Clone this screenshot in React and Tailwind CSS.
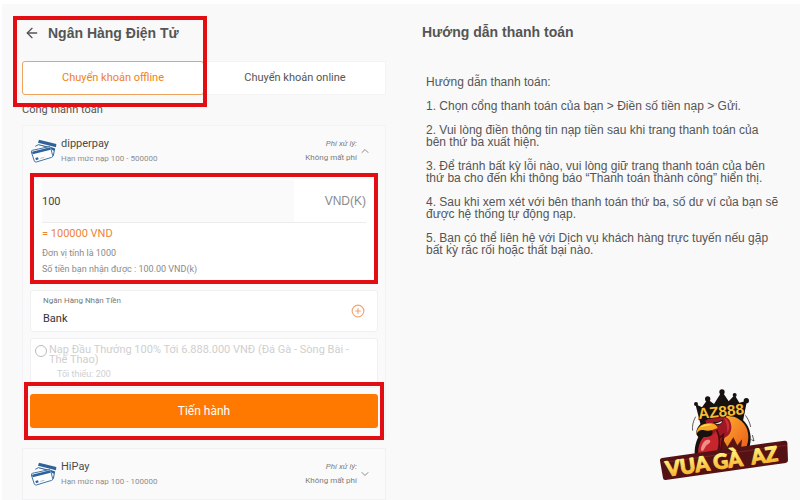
import { useState } from 'react';
import { ArrowLeft, ChevronDown, ChevronUp, CirclePlus } from 'lucide-react';

const STEPS = [
  '1. Chọn cổng thanh toán của bạn > Điền số tiền nạp > Gửi.',
  '2. Vui lòng điền thông tin nạp tiền sau khi trang thanh toán của bên thứ ba xuất hiện.',
  '3. Để tránh bất kỳ lỗi nào, vui lòng giữ trang thanh toán của bên thứ ba cho đến khi thông báo “Thanh toán thành công” hiển thị.',
  '4. Sau khi xem xét với bên thanh toán thứ ba, số dư ví của bạn sẽ được hệ thống tự động nạp.',
  '5. Bạn có thể liên hệ với Dịch vụ khách hàng trực tuyến nếu gặp bất kỳ rắc rối hoặc thất bại nào.',
];

function CardsIcon() {
  return (
    <svg viewBox="0 0 78 72" className="h-6 w-[26px] shrink-0" aria-hidden="true">
      <path d="M24 2 76 15 75 25 21 11z" fill="#2f6299" />
      <path d="M13 22 22 17 71 29 67 50 60 53" fill="#fff" stroke="#2f6299" strokeWidth="3" />
      <path d="m22 18 48 10-2 8-12-9z" fill="#2f6299" />
      <path d="M4 34 54 23q4-1 5 3l6 24q1 4-3 5L16 69q-4 1-6-3L1 39q-1-4 3-5z" fill="#fff" stroke="#3f73a6" strokeWidth="3" />
      <path d="M3 38 57 25l2 7L5 46z" fill="#2f6299" />
      <path d="m13 57 8-2 2 6-8 3z" fill="#2f6299" />
      <path d="m28 58 12-3" stroke="#7fa3c4" strokeWidth="2" />
    </svg>
  );
}

// Red frame that marks the area to look at
function Highlight({ className }) {
  return <div className={`pointer-events-none absolute z-10 border-4 border-[#e30d14] ${className}`} />;
}

function GatewayHeader({ name, limit, open, onToggle }) {
  const Chevron = open ? ChevronUp : ChevronDown;
  return (
    <button type="button" onClick={onToggle} className="flex h-[50px] w-full items-center pr-3.5 pl-2 text-left">
      <CardsIcon />
      <span className="ml-1 flex flex-1 flex-col">
        <span className="text-[11px] leading-4 text-[#4a4a4a]">{name}</span>
        <span className="text-[8px] leading-[14px] text-[#8d8d8d]">{limit}</span>
      </span>
      <span className="flex flex-col text-right text-[8px] leading-[14px] text-[#7c7c7c]">
        <em>Phí xử lý:</em>
        <span>Không mất phí</span>
      </span>
      <Chevron className="ml-0.5 h-3 w-3 text-[#8a8a8a]" strokeWidth={2} />
    </button>
  );
}

function Logo() {
  return (
    <svg viewBox="0 0 450 330" className="h-[110px] w-[150px]" role="img" aria-label="Vua Gà AZ">
      <defs>
        <linearGradient id="gold" x1="0" y1="0" x2="0" y2="1">
          <stop offset="0.2" stopColor="#fff27a" />
          <stop offset="1" stopColor="#f5a81c" />
        </linearGradient>
        <linearGradient id="feather" x1="0" y1="0" x2="1" y2="1">
          <stop offset="0" stopColor="#ffb22e" />
          <stop offset="1" stopColor="#e9571a" />
        </linearGradient>
      </defs>
      {/* crown */}
      <g fill="#17110f">
        <path d="M136 72 156 82 173 58 192 72 216 34 236 64 254 45 268 68 291 62 279 122 152 134z" />
        <circle cx="138" cy="72" r="6" />
        <circle cx="173" cy="57" r="8" />
        <circle cx="216" cy="36" r="8" />
        <circle cx="254" cy="45" r="6" />
        <circle cx="289" cy="62" r="8" />
      </g>
      {/* rooster */}
      <path d="M154 130c10-21 40-34 76-29 44 1 71 34 72 69 1 24-6 40-16 51l-150 16c-5-21 0-50 9-66-10-7-8-27 9-41z" fill="#17110f" />
      <path d="M228 107c42-1 69 31 67 66-1 18-6 32-14 42l-68 8c6-40 20-70 15-116z" fill="url(#feather)" />
      <path d="M214 220 217 174 232 200 250 172 262 196 276 178 272 218z" fill="#5a1510" />
      <path d="M165 123c22-18 61-19 73-4 13 25 5 47-18 56l-12 50-64 9c-3-33 5-49 21-62 17 2 20-5 23-17z" fill="#9f1722" />
      <path d="M161 171c19 1 33-6 38-21 13 30 5 55-6 80l-46 4c-3-28 1-50 14-63z" fill="#c6252d" />
      <path d="M200 150c14 26 10 50 2 76M206 176l14-12-9 54" fill="none" stroke="#4a0c12" strokeWidth="5" />
      <path d="M169 180c14-3 16 7 5 13s-10 20-18 20 1-30 13-33z" fill="#ef8d87" />
      <path d="M222 113c16 7 21 28 10 46 0-18-2-31-10-46z" fill="#cf3037" />
      <path d="M139 161c3-25 24-35 51-30 8 3 11 8 13 13-15 6-26 10-40 7-13-3-17 2-24 10z" fill="#f6a721" />
      <path d="M151 142c9-10 25-11 36-7-12 0-22 3-36 7z" fill="#ffe06b" />
      <path d="M191 127c10 2 17 0 26-7l-1 8c-6 7-18 7-25-1z" fill="#fff" stroke="#17110f" strokeWidth="3" />
      <path d="M286 106c8 10 14 23 16 35M307 165l5 18-8-4M137 110c-8 14-11 29-9 42" fill="none" stroke="#17110f" strokeWidth="2" />
      <text
        transform="rotate(-6 147 117)"
        x="146"
        y="117"
        fontFamily="Liberation Sans, sans-serif"
        fontWeight="700"
        fontSize="46"
        fill="#f8bd35"
        stroke="#17110f"
        strokeWidth="4"
        paintOrder="stroke"
      >
        AZ888
      </text>
      {/* name plate */}
      <path d="M36 234 404 182q7-1 8 6l2 53q0 7-7 8L47 300q-7 1-8-6l-9-52q-1-7 6-8z" fill="#551215" />
      <path d="M38 248 409 196" stroke="#792322" strokeWidth="3" />
      <g
        transform="rotate(-8 52 287)"
        fontFamily="Lato, sans-serif"
        fontWeight="900"
        fontSize="62"
        fill="url(#gold)"
        stroke="url(#gold)"
        strokeWidth="3"
        strokeLinejoin="round"
      >
        <text x="50" y="289">VUA</text>
        <text x="194" y="289">GÀ</text>
        <text x="308" y="289">AZ</text>
      </g>
    </svg>
  );
}

export default function App() {
  const [tab, setTab] = useState('offline');
  const [open, setOpen] = useState('dipperpay');
  const [amount, setAmount] = useState('100');

  const toggle = (name) => setOpen(open === name ? '' : name);
  const tabClass = (name) =>
    tab === name
      ? 'rounded-[3px] border border-[#eda35f] bg-white text-[#f07f22]'
      : 'border border-[#f3f3f3] bg-white text-[#555]';

  return (
    <div className="min-h-screen bg-white pt-1 pl-0.5 font-['Liberation_Sans',Arial,sans-serif] text-[#555]">
      <div className="relative grid min-h-[calc(100vh-4px)] grid-cols-2 gap-9 bg-[#f9f9f9] pr-3.5 pl-5">
        <main className="font-[Roboto,sans-serif]">
          <section className="relative pt-4 pb-3">
            <Highlight className="top-3 -left-[9px] bottom-0 w-[194px]" />
            <header className="flex h-[26px] items-center gap-2 pl-0.5 font-['Liberation_Sans',Arial,sans-serif]">
              <button type="button" aria-label="Quay lại">
                <ArrowLeft className="h-4 w-4" strokeWidth={2} />
              </button>
              <h1 className="text-[14px] font-bold">Ngân Hàng Điện Tử</h1>
            </header>
            <div className="mt-[15px] grid h-[34px] grid-cols-2 text-[11px]">
              <button type="button" onClick={() => setTab('offline')} className={tabClass('offline')}>
                Chuyển khoản offline
              </button>
              <button type="button" onClick={() => setTab('online')} className={tabClass('online')}>
                Chuyển khoản online
              </button>
            </div>
          </section>
          <h2 className="-mt-1 mb-2 text-[11px] leading-[14px]">Cổng thanh toán</h2>

          <section className="border border-[#f3f3f5] bg-[#fafafb]">
            <GatewayHeader
              name="dipperpay"
              limit="Hạn mức nạp 100 - 500000"
              open={open === 'dipperpay'}
              onToggle={() => toggle('dipperpay')}
            />
            {open === 'dipperpay' && (
              <form className="px-[7px] pb-2" onSubmit={(e) => e.preventDefault()}>
                <div className="relative h-[106px] bg-white px-3 pt-1">
                  <Highlight className="inset-x-0 -top-[3px] -bottom-0.5" />
                  <div className="flex h-[43px] items-center border-b border-[#ececec] text-[#8a8a8a]">
                    <input
                      aria-label="Số tiền nạp"
                      value={amount}
                      onChange={(e) => setAmount(e.target.value)}
                      className="h-full min-w-0 flex-1 bg-[#fafafb] text-[11px] text-[#444] outline-none"
                    />
                    <span className="w-[72px] text-right font-['Liberation_Sans',Arial,sans-serif] text-[12px]">
                      VND(K)
                    </span>
                  </div>
                  <p className="pt-[3px] text-[11px] leading-4 text-[#ee8435]">= {Number(amount) * 1000 || 0} VND</p>
                  <p className="mt-[3px] text-[9px] leading-4 text-[#8a8a8a]">Đơn vị tính là 1000</p>
                  <p className="text-[9px] leading-4 text-[#8a8a8a]">
                    Số tiền bạn nhận được : {(Number(amount) || 0).toFixed(2)} VND(k)
                  </p>
                </div>

                <div className="mt-2 flex h-[42px] items-center rounded-[3px] border border-[#f1f1f4] bg-white px-3">
                  <div className="flex-1">
                    <div className="text-[8px] leading-4 text-[#777]">Ngân Hàng Nhận Tiền</div>
                    <div className="text-[11px] leading-5 text-[#333]">Bank</div>
                  </div>
                  <button type="button" aria-label="Thêm ngân hàng">
                    <CirclePlus className="h-3.5 w-3.5 text-[#f0a575]" strokeWidth={2} />
                  </button>
                </div>

                <label className="mt-1.5 flex h-[50px] gap-0.5 rounded-[3px] border border-[#f1f1f4] bg-white pt-1.5 pr-3 pl-1 text-[#cfcfcf]">
                  <input
                    type="radio"
                    name="bonus"
                    className="h-3 w-3 shrink-0 appearance-none rounded-full border border-[#bbb] checked:bg-[#ff7900]"
                  />
                  <span className="text-[11px] leading-[10px]">
                    Nạp Đầu Thưởng 100% Tới 6.888.000 VNĐ (Đá Gà - Sòng Bài - Thể Thao)
                    <span className="block pt-1 pl-2 text-[9px]">Tối thiểu: 200</span>
                  </span>
                </label>

                <div className="relative mt-1.5">
                  <Highlight className="-inset-x-1.5 -top-3 -bottom-3" />
                  <button type="submit" className="h-[34px] w-full rounded-[3px] bg-[#ff7900] text-[12px] text-white">
                    Tiến hành
                  </button>
                </div>
              </form>
            )}
          </section>

          <section className="mt-[11px] border border-[#f1f1f4] bg-[#fafafb]">
            <GatewayHeader
              name="HiPay"
              limit="Hạn mức nạp 100 - 100000"
              open={open === 'HiPay'}
              onToggle={() => toggle('HiPay')}
            />
          </section>
        </main>

        <aside className="pt-4 pr-1.5">
          <h2 className="text-[14px] leading-6 font-bold">Hướng dẫn thanh toán</h2>
          <div className="mt-8 flex flex-col gap-3 pl-1 text-[12px] leading-3">
            <p>Hướng dẫn thanh toán:</p>
            {STEPS.map((step) => (
              <p key={step}>{step}</p>
            ))}
          </div>
        </aside>

        <div className="absolute right-0 bottom-2.5">
          <Logo />
        </div>
      </div>
    </div>
  );
}
